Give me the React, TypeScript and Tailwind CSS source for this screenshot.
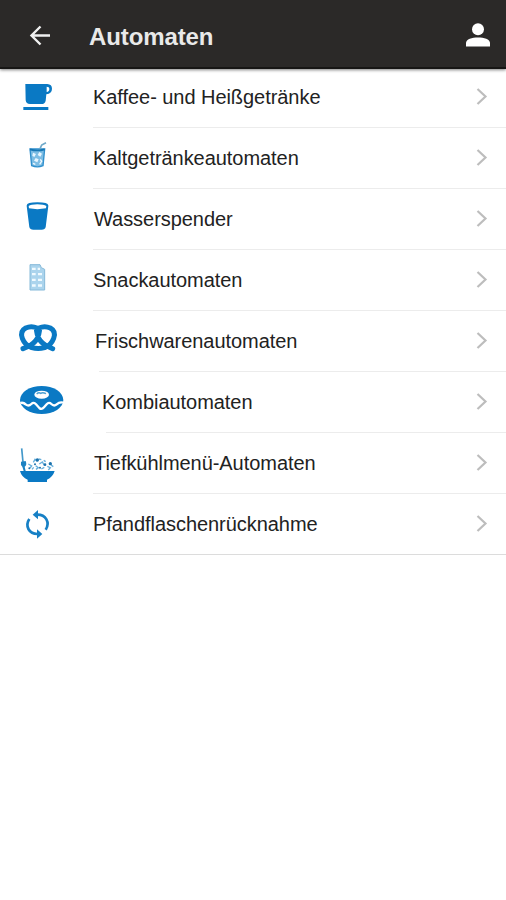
import React from 'react';

const CoffeeIcon = () => (
    <svg viewBox="0 -9 180 150" className="w-15 h-[50px]" fill="#0a79c4">
        <path d="M46 27H112Q126 28 126 41Q126 55 109 58L107 77Q105 87 94 87H60Q48 87 47 76ZM110 35V51Q118 50 118 42Q118 35 110 35Z" fillRule="evenodd" />
        <path d="M40 96H115V105H40Z" />
    </svg>
);

const ColdDrinkIcon = () => (
    <svg viewBox="0 -6 180 150" className="w-15 h-[50px]" fill="none">
        <path d="M60 42H104L99 92Q82 99 65 92Z" fill="#7dbde4" stroke="#2f8fcd" strokeWidth="4" />
        <path d="M88 46L95 30L108 23" stroke="#6fa9c9" strokeWidth="5" />
        <path d="M60 43Q82 50 104 43" stroke="#1777b5" strokeWidth="5" />
        <path d="M69 53L78 57L73 66L67 62ZM88 51L96 56L91 65L83 60ZM77 69L86 73L82 82L72 77Z" fill="#e8f6ff" />
        <path d="M69 85L76 88M91 73L95 79L89 88" stroke="#f2faff" strokeWidth="4" />
    </svg>
);

const WaterIcon = () => (
    <svg viewBox="0 -3 180 150" className="w-15 h-[50px]">
        <path d="M50 32Q50 22 82 22Q115 22 115 32L107 96Q105 104 95 104H70Q60 104 58 96Z" fill="#0a79c4" />
        <path d="M56 33Q62 28 82 28Q102 28 109 33L108 40Q82 45 57 40Z" fill="#fff" />
    </svg>
);

const SnackIcon = () => (
    <svg viewBox="0 0 180 150" className="w-15 h-[50px]">
        <path d="M60 29H90L94 38L104 43V105H60Z" fill="#abd4ed" stroke="#86bad9" strokeWidth="3" />
        <path d="M66 38H77V45H66ZM83 38H90V45H83ZM66 54H77V61H66ZM84 54H96V61H84ZM66 71H77V78H66ZM84 71H96V78H84ZM66 88H77V95H66ZM84 88H96V95H84Z" fill="#f0faff" />
    </svg>
);

const PretzelIcon = () => (
    <svg viewBox="0 3 180 150" className="w-15 h-[50px]" fill="none" stroke="#0a79c4" strokeWidth="15" strokeLinecap="round" strokeLinejoin="round">
        <path d="M39 101L51 96Q72 88 82 70Q92 46 87 39Q104 31 121 39Q139 49 131 70Q123 91 104 98Q84 103 65 98Q45 91 37 70Q29 49 47 39Q64 31 81 39Q76 46 86 70Q96 88 117 96L128 101" />
    </svg>
);

const DonutIcon = () => (
    <svg viewBox="0 6 180 150" className="w-15 h-[50px]">
        <ellipse cx="95" cy="75" rx="65" ry="42" fill="#0a79c4" />
        <path d="M31 84Q40 81 48 89Q56 95 64 87Q71 80 78 88L88 99Q95 105 102 97L110 88Q117 80 124 87Q132 95 140 88Q149 80 159 83" fill="none" stroke="#fff" strokeWidth="7" />
        <ellipse cx="95" cy="59" rx="22" ry="12" fill="#fff" />
        <path d="M80 57Q86 51 92 55Q98 51 108 56" fill="none" stroke="#4b9fd2" strokeWidth="4" />
    </svg>
);

const BowlIcon = () => (
    <svg viewBox="0 -6 180 150" className="w-15 h-[50px]">
        <path d="M30 93H134Q128 112 111 119V126H53V119Q35 112 30 93Z" fill="#0a79c4" />
        <path d="M35 25L39 66" stroke="#4398ca" strokeWidth="5" />
        <path d="M33 65L47 63Q52 76 44 80L47 93H41L37 80Q31 75 33 65Z" fill="#1d82c2" />
        <path d="M55 72L65 78L60 84M70 67L75 58L82 64M77 77L85 83L78 88M88 72L97 66L103 76M94 87L103 82M112 79L121 83L115 90M66 88L71 82M101 61L107 65M86 57L94 59M123 75L130 80" fill="none" stroke="#66afdc" strokeWidth="4" />
        <g fill="#1b72ad">
            <circle cx="82" cy="60" r="5" />
            <circle cx="121" cy="71" r="5" />
            <circle cx="105" cy="74" r="4" />
            <circle cx="75" cy="73" r="3" />
            <circle cx="90" cy="83" r="3" />
            <circle cx="58" cy="85" r="3" />
        </g>
    </svg>
);

const ReturnIcon = () => (
    <svg viewBox="0 -3 180 150" className="w-15 h-[50px]" fill="none" stroke="#1780c5" strokeWidth="8">
        <path d="M80 44C108 43 121 68 107 89" />
        <path d="M58 57C44 78 57 103 84 102" />
        <path d="M84 30V58L68 44ZM81 88V116L97 102Z" fill="#1780c5" stroke="none" />
    </svg>
);

const Chevron = () => (
    <svg viewBox="0 0 14 20" className="w-3.5 h-5 shrink-0" fill="none" stroke="#bdbdbd" strokeWidth="2.2">
        <path d="M2.5 2L10.5 9.5L2.5 17" />
    </svg>
);

const items = [
    { icon: <CoffeeIcon />, label: 'Kaffee- und Heißgetränke', text: 'ml-[23px]', line: 'ml-[93px]' },
    { icon: <ColdDrinkIcon />, label: 'Kaltgetränkeautomaten', text: 'ml-[23px]', line: 'ml-[93px]' },
    { icon: <WaterIcon />, label: 'Wasserspender', text: 'ml-6', line: 'ml-[93px]' },
    { icon: <SnackIcon />, label: 'Snackautomaten', text: 'ml-[23px]', line: 'ml-[93px]' },
    { icon: <PretzelIcon />, label: 'Frischwarenautomaten', text: 'ml-[25px]', line: 'ml-[99px]' },
    { icon: <DonutIcon />, label: 'Kombiautomaten', text: 'ml-8', line: 'ml-[106px]' },
    { icon: <BowlIcon />, label: 'Tiefkühlmenü-Automaten', text: 'ml-6', line: 'ml-[93px]' },
    { icon: <ReturnIcon />, label: 'Pfandflaschenrücknahme', text: 'ml-[23px]', line: '' },
];

export default function App() {
    return (
        <div className="min-h-screen bg-white font-['Liberation_Sans',Arial,sans-serif]">
            <header className="relative z-10 flex h-[69px] items-center border-b-2 border-[#171615] bg-[#2b2928] pl-7 pr-[15px] pt-1 shadow-[0_1px_3px_rgba(0,0,0,0.5)]">
                <svg viewBox="0 0 24 24" className="-mt-0.5 size-6" fill="none" stroke="#f0f0f0" strokeWidth="2.4">
                    <path d="M12.5 3.5L3.5 12.5L12.5 21.5M3.5 12.5H22" />
                </svg>
                <h1 className="ml-[37px] flex-1 pt-0.5 text-2xl font-bold leading-none tracking-[-0.1px] text-[#e9e9e9]">Automaten</h1>
                <svg viewBox="0 0 26 26" className="size-[26px] -mt-0.5" fill="#fff">
                    <circle cx="13" cy="7.2" r="6" />
                    <path d="M1 24.5V21C1 13.8 25 13.8 25 21V24.5Z" />
                </svg>
            </header>
            <ul className="-mt-0.5">
                {items.map((item, i) => (
                    <li key={item.label}>
                        <div className="flex h-15 items-center pl-2.5 pr-[17px]">
                            {item.icon}
                            <span className={`${item.text} flex-1 whitespace-nowrap text-[20px] tracking-[-0.05px] text-[#222]`}>{item.label}</span>
                            <Chevron />
                        </div>
                        <div className={`h-px ${item.line} ${i === items.length - 1 ? 'bg-[#dcdcdc]' : 'bg-[#ececec]'}`} />
                    </li>
                ))}
            </ul>
        </div>
    );
}
